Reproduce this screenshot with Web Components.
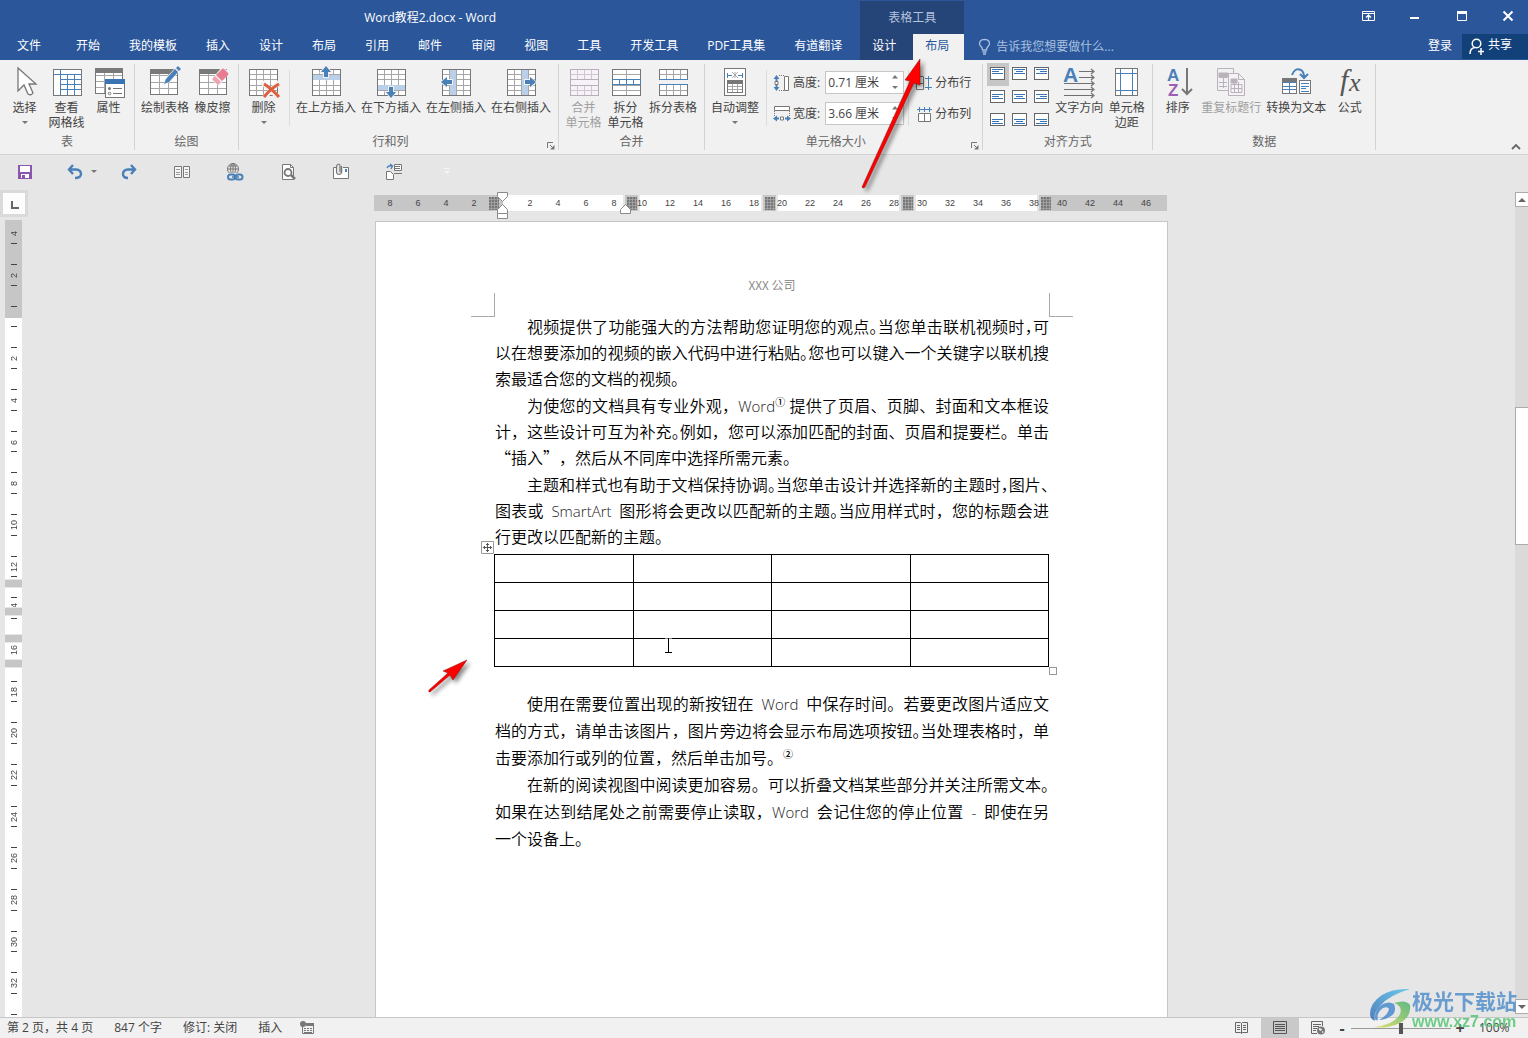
<!DOCTYPE html>
<html lang="zh-CN">
<head>
<meta charset="utf-8">
<title>Word教程2.docx - Word</title>
<style>
html,body{height:100%;margin:0}
body{font:12px/16px "Open Sans","Noto Sans CJK SC",sans-serif;color:#444;background:#e6e6e6;overflow:hidden}
</style>
</head>
<body>
<word-app></word-app>
<script>
const grid=(x,y,w,h,c,r,line='#a6a6a6',edge='#777',fill='#fff')=>{
  let d='';
  for(let i=1;i<c;i++)d+=`M${x+Math.round(w*i/c)+.5} ${y+1}v${h-1}`;
  for(let i=1;i<r;i++)d+=`M${x+1} ${y+Math.round(h*i/r)+.5}h${w-1}`;
  return `<rect x="${x+.5}" y="${y+.5}" width="${w}" height="${h}" fill="${fill}" stroke="${edge}"/><path d="${d}" stroke="${line}"/>`;
};
const page=lines=>`<rect x=".5" y=".5" width="14" height="12" fill="#fff" stroke="#666"/><path d="${lines}" stroke="#3b74b5"/>`;
const al=(v,h)=>{const y=v==0?2.5:v==1?4.5:6.5;let d='';
  [11,7,11].forEach((w,i)=>{const x=h==0?2:h==1?Math.floor((15-w)/2):13-w;d+=`M${x} ${y+i*2}h${w}`});return page(d)};
const B='#4a80b8';
const ICONS={
 select:[32,32,`<path d="M9 2v23l6-6 4 9q3 2 5-1l-4-9h7z" fill="#fff" stroke="#777" stroke-width="1.3"/>`],
 viewgrid:[32,32,`<g shape-rendering="crispEdges">${grid(2,3,28,26,1,1)}<path d="M9.5 4v25M3 8.5h27" stroke="${B}"/><path d="M16.5 8v21M23.5 8v21M9 13.5h21M9 18.5h21M9 23.5h21" stroke="${B}"/></g>`],
 props:[32,32,`<g shape-rendering="crispEdges">${grid(2,3,27,24,3,4)}<path d="M2 2h28v5H2z" fill="#7a7a7a"/><rect x="12.5" y="13.5" width="19" height="18" fill="#fff" stroke="#777"/><path d="M12 13h20v5H12z" fill="#3b74b5"/><path d="M20 22.5h9M20 27.5h9" stroke="#777"/></g><circle cx="16.5" cy="22.5" r="1.5" fill="#777"/><circle cx="16.5" cy="27.5" r="1.3" fill="#fff" stroke="#777"/>`],
 draw:[32,32,`<g shape-rendering="crispEdges">${grid(1,3,27,25,3,4)}<path d="M1 3h28v5H1z" fill="#7a7a7a"/></g><path d="M14 19l3-7L28 0l4 3-11 13z" fill="#f1f1f1"/><path d="M15 18l2-5 9-10 3 3-9 10zM27 2l2-2 3 3-2 2z" fill="${B}"/>`],
 erase:[32,32,`<g shape-rendering="crispEdges">${grid(2,3,27,25,3,4)}<path d="M2 3h28v5H2z" fill="#7a7a7a"/></g><path d="M14 14L25 1l8 5-11 14z" fill="#f1f1f1"/><path d="M19 9l6-6q1-1 2 0l4 4q1 1 0 2l-6 6z" fill="#e87d92"/><path d="M18 10l6 6-2 2q-1 1-2 0l-4-4q-1-1 0-2z" fill="#f0a1b0"/>`],
 del:[32,32,`<g shape-rendering="crispEdges">${grid(1,3,28,26,4,5)}</g><path d="M14 16l18 17M31 16L15 33" stroke="#f1f1f1" stroke-width="5"/><path d="M16 18q7 4 15 13M31 18Q22 23 16 31" stroke="#dd5f3b" stroke-width="3"/>`],
 up:[32,32,`<g shape-rendering="crispEdges">${grid(2,3,28,26,4,5)}<path d="M3 9h27v5H3z" fill="#bad0e8"/></g><path d="M16-1l7 8h-4v5h-6V7H9z" fill="#f1f1f1"/><path d="M16 0l5 6h-3v5h-4V6h-3z" fill="${B}"/>`],
 down:[32,32,`<g shape-rendering="crispEdges">${grid(2,3,28,26,4,5)}<path d="M3 19h27v5H3z" fill="#bad0e8"/></g><path d="M16 33l7-8h-4v-5h-6v5H9z" fill="#f1f1f1"/><path d="M16 32l5-6h-3v-5h-4v5h-3z" fill="${B}"/>`],
 left:[32,32,`<g shape-rendering="crispEdges">${grid(2,3,28,26,4,5)}<path d="M10 4h6v25h-6z" fill="#bad0e8"/></g><path d="M0 16l7-6v3h6v6H7v4z" fill="#f1f1f1"/><path d="M1 16l6-5v3h5v4H7v3z" fill="${B}"/>`],
 right:[32,32,`<g shape-rendering="crispEdges">${grid(2,3,28,26,4,5)}<path d="M17 4h6v25h-6z" fill="#bad0e8"/></g><path d="M32 16l-7-6v3h-6v6h6v4z" fill="#f1f1f1"/><path d="M31 16l-6-5v3h-5v4h5v3z" fill="${B}"/>`],
 merge:[32,32,`<g shape-rendering="crispEdges">${grid(2,3,28,26,4,5,'#d0c5d2','#b9adbb','#f7f1f8')}<path d="M3 14h27v5H3z" fill="#f7f1f8"/><path d="M2 13.5h28M2 19.5h28" stroke="#b9adbb"/></g>`],
 split:[32,32,`<g shape-rendering="crispEdges">${grid(2,3,28,26,2,5)}<path d="M2.5 13.5h28v5h-28zM9.5 14v5M16.5 14v5M23.5 14v5" stroke="${B}" fill="#fff"/></g>`],
 splittable:[32,32,`<g shape-rendering="crispEdges">${grid(2,3,28,10,4,2)}${grid(2,18,28,11,4,2)}<path d="M2 13.5h29M2 18.5h29" stroke="${B}"/></g>`],
 autofit:[32,32,`<g shape-rendering="crispEdges"><rect x="5.5" y="2.5" width="21" height="27" fill="#fff" stroke="#777"/>${grid(8,14,15,12,3,4)}<path d="M8 14h16v4H8z" fill="#777"/><path d="M8.5 7v5M23.5 7v5M9 9.5h4M19 9.5h4" stroke="${B}"/></g><path d="M13 6l6 6M19 6l-6 6M16 6v6" stroke="#999" stroke-width=".8"/>`],
 textdir:[32,32,`<text x="0" y="16" font-family="Liberation Sans" font-size="21" font-weight="700" fill="${B}">A</text><path d="M16 5.5h14M16 11.5h14M1 17.5h29M1 23.5h29M1 29.5h29M28 3l3 2.5-3 2.5M28 9l3 2.5-3 2.5M28 15l3 2.5-3 2.5M28 21l3 2.5-3 2.5M28 27l3 2.5-3 2.5" stroke="#707070" stroke-width="1.2"/>`],
 margins:[32,32,`<g shape-rendering="crispEdges"><rect x="4.5" y="2.5" width="22" height="27" fill="#fff" stroke="#777"/><path d="M9.5 3v26M21.5 3v26M5 7.5h21M5 24.5h21" stroke="${B}"/></g>`],
 sort:[32,32,`<text x="5" y="15" font-family="Liberation Sans" font-size="17" font-weight="700" fill="${B}">A</text><text x="6" y="30" font-family="Liberation Sans" font-size="17" font-weight="700" fill="#9b5fb8">Z</text><path d="M25 2v25M20 23l5 5 5-5" stroke="#777" stroke-width="2"/>`],
 repeat:[32,32,`<g stroke="#b9b1bb"><path d="M2.5 2.5h16v22h-16z" fill="#f1f1f1"/><path d="M4 11.5h8M4 16.5h8M4 20.5h8M8.5 7v15"/><path d="M4 7h9v4H4z" fill="#b9b1bb"/><path d="M13.5 7.5h10l6 6v16h-16z" fill="#f5f2f6"/><path d="M23.5 7.5v6h6M16 18.5h11v8H16zM16 22.5h11M19.5 14v12M23.5 16v10"/><path d="M16 13h6v4h-6z" fill="#b9b1bb"/></g>`],
 convert:[32,32,`<g shape-rendering="crispEdges">${grid(2,12,14,15,2,4,B)}<path d="M2 12h15v4H2z" fill="#777"/><rect x="19.5" y="14.5" width="11" height="13" fill="#fff" stroke="#777"/><path d="M21 17.5h8M21 20.5h8M21 22.5h5M21 25.5h8" stroke="${B}"/></g><path d="M12 9Q15 1 21 4q3 2 3 7M20 8l4 4 4-4" stroke="${B}" stroke-width="2"/>`],
 fx:[32,32,`<text x="6" y="24" font-family="Liberation Serif" font-style="italic" font-size="30" fill="#555">f</text><text x="15" y="25" font-family="Liberation Serif" font-style="italic" font-size="26" fill="#555">x</text>`],
 rowh:[18,18,`<path d="M11.5 2.5h4v14h-4z" fill="#fff" stroke="#777"/><path d="M6 1.5h5M6 16.5h5" stroke="#777" stroke-dasharray="1 1"/><path d="M3.5 1l3 4h-6zM3.5 17l3-4h-6z" fill="${B}"/><path d="M3.5 4v3M3.5 11v3" stroke="${B}" stroke-width="2"/><path d="M2 7.5h3v3H2z" fill="#fff" stroke="#777"/>`],
 colw:[18,18,`<path d="M1.5 1.5h15v4h-15z" fill="#fff" stroke="#777"/><path d="M1.5 6v5M16.5 6v5" stroke="#777" stroke-dasharray="1 1"/><path d="M0 13.5l4-3v6zM18 13.5l-4-3v6z" fill="${B}"/><path d="M3 13.5h3M12 13.5h3" stroke="${B}" stroke-width="2"/><path d="M7.5 12h3v3h-3z" fill="#fff" stroke="#777"/>`],
 disrow:[18,18,`<path d="M1.5 2.5h7v13h-7zM1 9.5h8" stroke="#777" fill="#fff"/><path d="M10 4.5h7M10 13.5h7M13.5 2v14" stroke="${B}"/>`],
 discol:[18,18,`<path d="M3.5 8.5h12v8h-12zM9.5 8v9" stroke="#777" fill="#fff"/><path d="M2 4.5h15M4.5 2v5M9.5 2v5M14.5 2v5" stroke="${B}"/>`],
 launch:[8,8,`<path d="M.5 6V.5H6" stroke="#777"/><path d="M3 3l3 3" stroke="#777"/><path d="M7.5 3v4.5H3z" fill="#777"/>`],
 chevron:[10,10,`<path d="M1 7l4-4 4 4" stroke="#666" stroke-width="1.8"/>`],
 save:[16,16,`<path d="M1 1h14v14H1z" fill="#8b57ae"/><path d="M3 2h10v6H3zM4 10h8v4H4z" fill="#fff"/><path d="M5 11h3v3H5z" fill="#8b57ae"/>`],
 undo:[16,16,`<path d="M6 1L2 5.5 6 10M2 5.5h7q5 .5 5 4.5t-6 4" stroke="#4a7fb9" stroke-width="2.4"/>`],
 redo:[16,16,`<path d="M10 1l4 4.5-4 4.5M14 5.5H7q-5 .5-5 4.5t5 4" stroke="#4a7fb9" stroke-width="2.4"/>`],
 cols:[18,16,`<path d="M1.5 2.5h7v11h-7zM10.5 2.5h6v11h-6z" fill="#f5f5f5" stroke="#777"/><path d="M3 5.5h4M3 8.5h4M3 10.5h4M12 5.5h3M12 8.5h3M12 10.5h3" stroke="#999"/>`],
 weblink:[18,18,`<circle cx="7" cy="6" r="5.5" stroke="#777"/><path d="M1.5 6h11M7 .5v11M3 3h8" stroke="#777"/><ellipse cx="7" cy="6" rx="2.5" ry="5.5" stroke="#777"/><path d="M1 10h17v8H1z" fill="#e6e6e6"/><rect x="2" y="11.5" width="7" height="5" rx="2.5" stroke="${B}" stroke-width="2"/><rect x="9.5" y="11.5" width="7" height="5" rx="2.5" stroke="${B}" stroke-width="2"/><path d="M6 14h7" stroke="${B}" stroke-width="1.5"/>`],
 preview:[18,18,`<path d="M3.5 1.5h8l3 3v12h-11z" fill="#fff" stroke="#777"/><path d="M11.5 1.5v3h3" stroke="#777"/><circle cx="9" cy="9.5" r="3.5" fill="#fff" stroke="#777" stroke-width="1.8"/><path d="M12 12l4 4" stroke="#777" stroke-width="2.5"/>`],
 attach:[18,18,`<path d="M1.5 4.5h15v11h-15z" fill="#fff" stroke="#777"/><path d="M13 6h2v3h-2z" fill="${B}"/><path d="M4 0h7v11H4z" fill="#e6e6e6"/><path d="M9.5 3v6q-.5 2.5-2.5 2.5T4.5 9V3.5Q5 1 6.5 1T8 3v6" stroke="#777" stroke-width="1.2"/>`],
 linkdoc:[18,18,`<path d="M9.5 1.5h7v6h-7z" fill="#fff" stroke="#777"/><path d="M10 3.5h5M10 5.5h5M9 10.5h8" stroke="#777"/><path d="M1.5 8.5h4l3 3v5h-7z" fill="#fff" stroke="#777"/><path d="M2 5q1-3 5-2M5 1l2.5 2L6 6" stroke="${B}" stroke-width="1.3"/>`],
 caret:[8,8,`<path d="M1 2h6L4 5z" fill="#777"/>`],
 caretup:[8,8,`<path d="M1 5.5h6L4 2z" fill="#777"/>`],
 up2:[8,8,`<path d="M0 6h8L4 2z" fill="#666"/>`],
 down2:[8,8,`<path d="M0 2h8L4 6z" fill="#666"/>`],
 ghost:[8,8,`<path d="M1 .5h6" stroke="#f5f5f5"/><path d="M1 3h6L4 6z" fill="#f5f5f5"/>`],
 bulb:[14,18,`<path d="M4.5 12Q4.5 10 3 8.5 1.5 7 1.5 5.5q.5-4 5-4.2 4.8.2 5 4.2 0 1.5-1.5 3T8.5 12zM4.5 14h4M5 16h3" stroke="#a9c0e0" stroke-width="1.3"/>`],
 disp:[16,12,`<path d="M1.5 1.5h12v9h-12zM1 3.5h13" stroke="#fff"/><path d="M7.5 10V5M5 7.5L7.5 5 10 7.5" stroke="#fff" stroke-width="1.3"/>`],
 min:[12,12,`<path d="M1 7h9v2H1z" fill="#fff"/>`],
 max:[12,12,`<path d="M1.5 1.5h9v9h-9z" stroke="#fff"/><path d="M1 1h10v3H1z" fill="#fff"/>`],
 close:[12,12,`<path d="M1.5 1.5l9 9M10.5 1.5l-9 9" stroke="#fff" stroke-width="2"/>`],
 person:[18,18,`<circle cx="8.5" cy="5.5" r="4.3" stroke="#fff" stroke-width="1.5"/><path d="M2 16q0-6 5-6.5M10 13.5h6M13 10v7" stroke="#fff" stroke-width="1.5"/>`],
 macro:[16,16,`<path d="M3.5 4.5h11v9h-11z" fill="#f1f1f1" stroke="#777"/><path d="M7 3h8v3H7z" fill="#777"/><path d="M5 8.5h2M8 8.5h2M11 8.5h2M5 10.5h2M8 10.5h2M11 10.5h2M5 12.5h8" stroke="#777"/><circle cx="4" cy="4" r="3" fill="#777"/>`],
 read:[16,16,`<path d="M1.5 2.5h5l1 1 1-1h5v10h-5l-1 1-1-1h-5zM7.5 3v11" stroke="#666"/><path d="M3 5.5h3M3 7.5h3M3 9.5h3M9 5.5h3M9 7.5h3M9 9.5h3" stroke="#666"/>`],
 print:[16,16,`<path d="M1.5 1.5h13v12h-13z" stroke="#555"/><path d="M3 4.5h10M3 6.5h10M3 8.5h10M3 10.5h10" stroke="#555"/>`],
 web:[16,16,`<path d="M12.5 6V1.5h-11v12H7" stroke="#666"/><path d="M3 4.5h8M3 6.5h6M3 8.5h4M3 10.5h3" stroke="#666"/><circle cx="11" cy="10.5" r="4" fill="#777"/><path d="M9 8l3 1-1 2-2-1zM12 11l2 1-2 1z" fill="#f1f1f1"/>`],
 move:[13,13,`<path d="M.5.5h12v12H.5z" fill="#fff" stroke="#999"/><path d="M6.5 2v9M2 6.5h9M5 3.5h3M5 9.5h3M3.5 5v3M9.5 5v3" stroke="#555"/>`],
 ibeam:[9,18,`<path d="M1 .5h7" stroke="#fff" stroke-width="2"/><path d="M4.5 1v14M1 15.5h7" stroke="#000"/>`],
 block:[10,13,`<path d="M0 0h10v13H0z" fill="#777"/><path d="M2.5 0v13M5.5 0v13M8.5 0v13M0 2.5h10M0 5.5h10M0 8.5h10M0 11.5h10" stroke="#aaa" stroke-width=".7"/>`],
 indent:[12,28,`<path d="M.5.5h10v4l-5 5-5-5z" fill="#fff" stroke="#8a8a8a"/><path d="M5.5 12.5l5 5v4H.5v-4zM.5 21.5h10v5H.5z" fill="#fff" stroke="#8a8a8a"/>`],
 indentr:[12,10,`<path d="M5.5 .5l5 5v4H.5v-4z" fill="#fff" stroke="#8a8a8a"/>`]
};
['top','mid','bot'].forEach((v,i)=>['l','c','r'].forEach((h,j)=>ICONS['al-'+v+h]=[15,13,al(i,j)]));

const define=(name,css,html)=>customElements.define(name,class extends HTMLElement{
  connectedCallback(){
    if(this.shadowRoot)return;
    const r=this.attachShadow({mode:'open'});
    const t=document.createElement('template');
    t.innerHTML='<style>*{box-sizing:border-box}button{font:inherit;color:inherit;border:0;padding:0;background:none}'+css+'</style>'+(typeof html==='function'?html(this):html);
    r.append(t.content.cloneNode(true));
  }
});

define('word-icon',':host{display:inline-flex;flex:none}svg{display:block;overflow:visible}',el=>{
  const [w,h,s]=ICONS[el.getAttribute('name')];
  return `<svg width="${w}" height="${h}" viewBox="0 0 ${w} ${h}" fill="none" aria-hidden="true">${s}</svg>`;
});

define('ribbon-button',`:host{display:flex}
button{display:flex;flex-direction:column;align-items:center;min-width:42px;padding:0 3px 0 2px;line-height:15px;white-space:nowrap;color:#444}
:host([off]) button{color:#a0a0a0}
.t{margin-top:2px;text-align:center}
.c{height:15px;display:flex;align-items:center}`,
el=>`<button type="button"${el.hasAttribute('off')?' disabled':''}><word-icon name="${el.getAttribute('icon')}"></word-icon><span class="t"><slot></slot></span>${el.hasAttribute('menu')?'<span class="c"><word-icon name="caret"></word-icon></span>':''}</button>`);

define('ribbon-group',`:host{display:flex;flex-direction:column;position:relative;padding:2px 4px 0;margin:4px 0;border-right:1px solid #d2d2d2}
.b{display:flex;height:70px}.l{text-align:center;color:#666;line-height:16px}
:host([launcher]) .l{padding-right:16px}
.k{position:absolute;right:3px;bottom:0;display:flex}`,
el=>`<div class="b"><slot></slot></div><div class="l">${el.getAttribute('label')}</div>${el.hasAttribute('launcher')?'<button class="k" aria-label="更多选项"><word-icon name="launch"></word-icon></button>':''}`);

define('ribbon-divider',':host{display:block;width:1px;height:56px;background:#dcdcdc;margin:4px 4px 0}','');

define('size-field',`:host{display:flex;align-items:center}
label{margin:0 5px 0 2px}
.f{display:flex;width:79px;height:23px;background:#fff;border:1px solid #c6c6c6}
input{flex:1;min-width:0;border:0;padding:0 0 0 2px;font:inherit;color:#444;background:none;outline:0}
.s{display:flex;flex-direction:column;justify-content:space-around;width:16px}.s button{display:flex;justify-content:center}`,
el=>`<word-icon name="${el.getAttribute('icon')}"></word-icon><label for="f">${el.getAttribute('label')}</label><div class="f"><input id="f" value="${el.getAttribute('value')}"><div class="s"><button aria-label="增加"><word-icon name="caretup"></word-icon></button><button aria-label="减少"><word-icon name="caret"></word-icon></button></div></div>`);

define('small-button',':host{display:flex}button{display:flex;align-items:center;gap:2px;height:23px;white-space:nowrap}',
el=>`<button type="button"><word-icon name="${el.getAttribute('icon')}"></word-icon><slot></slot></button>`);

define('align-grid',`:host{display:grid;grid-template-columns:repeat(3,22px);grid-auto-rows:23px;margin-top:-3px}
button{display:flex;justify-content:center;padding:4px 1px 0 0}button:first-of-type{background:#c6c6c6}`,
()=>['top','mid','bot'].map(v=>['l','c','r'].map(h=>`<button aria-label="对齐 ${v} ${h}"><word-icon name="al-${v}${h}"></word-icon></button>`).join('')).join(''));

define('title-bar',`:host{display:flex;background:#2b579a;color:#fff;height:60px}
.main,.ctx,.end{display:flex;flex-direction:column}
.title{height:34px;line-height:36px;text-align:center}
.tabs{display:flex;gap:29px;height:26px;padding:0 18px 0 17px;white-space:nowrap}
.tabs button:first-child{margin-right:6px}
.ctx{background:#254478;margin-top:1px}.ctx .title{color:#b4c3dc;height:33px;line-height:34px}
.sub{display:flex;height:26px}.sub button{padding:0 13px 3px 12px}.tabs button{padding-bottom:3px}
.sub .on{background:#f1f1f1;color:#2b579a;margin-left:4px;padding-right:15px}
.end{flex:1}
.win{display:flex;height:34px;align-items:center;justify-content:flex-end}
.win button{display:flex;justify-content:center;width:46px;padding-bottom:2px}
.win button:last-child{width:40px}.win button:nth-last-child(2){width:52px}.win button:nth-last-child(3){width:42px}.win button:first-child{width:50px}
.row{display:flex;height:26px;align-items:center}
.tell{display:flex;flex:1;align-items:center;gap:4px;padding-left:14px}
input{flex:1;border:0;background:none;outline:0;font:inherit;color:#fff;padding:0}
input::placeholder{color:#a9c0e0;opacity:1}
.in{padding:0 10px 2px}
.share{display:flex;align-items:center;gap:2px;align-self:stretch;margin-bottom:1px;padding:0 16px 3px 6px;background:#124078}
.share word-icon{margin-top:3px}`,
`<div class="main"><div class="title">Word教程2.docx - Word</div><nav class="tabs">${['文件','开始','我的模板','插入','设计','布局','引用','邮件','审阅','视图','工具','开发工具','PDF工具集','有道翻译'].map(t=>`<button>${t}</button>`).join('')}</nav></div>
<div class="ctx"><div class="title">表格工具</div><nav class="sub"><button>设计</button><button class="on">布局</button></nav></div>
<div class="end"><div class="win"><button aria-label="功能区显示选项"><word-icon name="disp"></word-icon></button><button aria-label="最小化"><word-icon name="min"></word-icon></button><button aria-label="最大化"><word-icon name="max"></word-icon></button><button aria-label="关闭"><word-icon name="close"></word-icon></button></div>
<div class="row"><label class="tell"><word-icon name="bulb"></word-icon><input aria-label="告诉我您想要做什么" placeholder="告诉我您想要做什么..."></label><button class="in">登录</button><button class="share"><word-icon name="person"></word-icon>共享</button></div></div>`);

define('word-ribbon',`:host{display:flex;position:relative;height:95px;background:#f1f1f1;border-bottom:1px solid #d2d2d2}
.st{display:flex;flex-direction:column;gap:8px;padding:5px 0 0 2px}
.st.r{padding:5px 7px 0 2px}
.col{position:absolute;right:7px;bottom:2px;display:flex}`,
`<ribbon-group label="表"><ribbon-button icon="select" menu>选择</ribbon-button><ribbon-button icon="viewgrid">查看<br>网格线</ribbon-button><ribbon-button icon="props">属性</ribbon-button></ribbon-group>
<ribbon-group label="绘图"><ribbon-button icon="draw">绘制表格</ribbon-button><ribbon-button icon="erase">橡皮擦</ribbon-button></ribbon-group>
<ribbon-group label="行和列" launcher><ribbon-button icon="del" menu>删除</ribbon-button><ribbon-divider></ribbon-divider><ribbon-button icon="up">在上方插入</ribbon-button><ribbon-button icon="down">在下方插入</ribbon-button><ribbon-button icon="left">在左侧插入</ribbon-button><ribbon-button icon="right">在右侧插入</ribbon-button></ribbon-group>
<ribbon-group label="合并"><ribbon-button icon="merge" off>合并<br>单元格</ribbon-button><ribbon-button icon="split">拆分<br>单元格</ribbon-button><ribbon-button icon="splittable">拆分表格</ribbon-button></ribbon-group>
<ribbon-group label="单元格大小" launcher><ribbon-button icon="autofit" menu>自动调整</ribbon-button><ribbon-divider></ribbon-divider><div class="st"><size-field icon="rowh" label="高度:" value="0.71 厘米"></size-field><size-field icon="colw" label="宽度:" value="3.66 厘米"></size-field></div><ribbon-divider></ribbon-divider><div class="st r"><small-button icon="disrow">分布行</small-button><small-button icon="discol">分布列</small-button></div></ribbon-group>
<ribbon-group label="对齐方式"><align-grid></align-grid><ribbon-button icon="textdir">文字方向</ribbon-button><ribbon-button icon="margins">单元格<br>边距</ribbon-button></ribbon-group>
<ribbon-group label="数据"><ribbon-button icon="sort">排序</ribbon-button><ribbon-button icon="repeat" off>重复标题行</ribbon-button><ribbon-button icon="convert">转换为文本</ribbon-button><ribbon-button icon="fx">公式</ribbon-button></ribbon-group>
<button class="col" aria-label="折叠功能区"><word-icon name="chevron"></word-icon></button>`);

define('quick-bar',`:host{display:flex;align-items:center;gap:25px;height:35px;padding:0 11px 2px}
button{display:flex;justify-content:center;align-items:center;width:28px;height:24px}
.u{display:flex;margin:0 -9px 0 -3px}.u button+button{width:10px}`,
`<button aria-label="保存"><word-icon name="save"></word-icon></button><div class="u"><button aria-label="撤消"><word-icon name="undo"></word-icon></button><button aria-label="撤消列表"><word-icon name="caret"></word-icon></button></div>${[['redo','重做'],['cols','多页'],['weblink','超链接'],['preview','打印预览'],['attach','邮件附件'],['linkdoc','切换'],['ghost','自定义']].map(a=>`<button aria-label="${a[1]}"><word-icon name="${a[0]}"></word-icon></button>`).join('')}`);

define('h-ruler',`:host{display:flex;position:relative;height:16px;width:793px;margin:5px 2px 10px 0;padding-left:2px;font:9px/17px "Liberation Sans",sans-serif;
background:linear-gradient(90deg,#c6c6c6 129px,#fff 129px 249px,#e6e6e6 249px 251px,#c6c6c6 251px 264px,#e6e6e6 264px 266px,#fff 266px 387px,#e6e6e6 387px 389px,#c6c6c6 389px 402px,#e6e6e6 402px 404px,#fff 404px 525px,#e6e6e6 525px 527px,#c6c6c6 527px 540px,#e6e6e6 540px 542px,#fff 542px 663px,#e6e6e6 663px 665px,#c6c6c6 665px)}
span{width:28px;text-align:center;position:relative;z-index:1}
.m{position:absolute;z-index:2}`,
()=>{let s='';for(let n=-8;n<=46;n+=2)s+=`<span>${n?Math.abs(n):''}</span>`;
return s+[115,253,391,529,667].map(x=>`<word-icon class="m" name="block" style="left:${x}px;top:2px"></word-icon>`).join('')+'<word-icon class="m" name="indent" style="left:123px;top:-3px"></word-icon><word-icon class="m" name="indentr" style="left:246px;top:9px"></word-icon>'});

define('v-ruler',`:host{display:flex;flex-direction:column;width:28px;font:9px/9px "Liberation Sans",sans-serif}
.tab{height:27px;border:3px solid #dadada;background:#fdfdfd;width:28px;display:flex;align-items:center;justify-content:center;padding:3px 0 0 1px}
.tab i{width:8px;height:8px;border:solid #666;border-width:0 0 2px 2px}
.bar{position:relative;flex:1;min-height:0;overflow:hidden;margin:3px 6px 0 5px;background:linear-gradient(#c6c6c6 98px,#fff 98px)}
.c{display:flex;flex-direction:column;align-items:center;justify-content:space-between;height:42px;padding:10px 0}
.c:nth-child(3n){height:41px}.c:first-child{margin-top:-8px}
.c:before,.c:after{content:"";width:6px;height:1px;background:#444;margin-left:1px}
.c:first-child:before{visibility:hidden}
.c span{writing-mode:vertical-rl;transform:rotate(180deg);height:12px;text-align:center;margin-left:1px}
.g{position:absolute;left:0;right:0;height:7px;background:#c6c6c6;outline:1px solid #e6e6e6}`,
()=>{let s='';for(let n=-4;n<=34;n+=2)s+=`<div class="c"><span>${n&&n<34?Math.abs(n):''}</span></div>`;
return '<div class="tab"><i></i></div><div class="bar">'+s+[360,388,415,440].map(y=>`<div class="g" style="top:${y}px"></div>`).join('')+'</div>'});

define('doc-page',`:host{display:block;flex:none;width:793px;height:1122px;padding:55px 118px 0 119px;background:#fff;border:1px solid #c6c6c6;color:#000;font:350 16px/26px "Noto Sans CJK SC",sans-serif;text-spacing-trim:space-all}
header{font-size:12px;line-height:16px;color:#808080;text-align:center}
.mk{display:flex;justify-content:space-between;margin:0 -24px -4px}
.mk i{width:24px;height:24px;border:solid #aaa;border-width:0 1px 1px 0}.mk i+i{border-width:0 0 1px 1px}
p{margin:0 0 1px;text-indent:32px;text-align:justify}
.b p{line-height:27px;margin:0}
.e{font:350 15px/20px "Open Sans",sans-serif;color:#222;margin:0 4px}
.n{margin-left:0}.z{margin:0}
b{font-weight:inherit;font-feature-settings:"halt"}
sup{font-size:10px;font-weight:500;line-height:10px}
.t{position:relative;margin:5px 0 23px -1px}
table{border-collapse:collapse;width:100%;table-layout:fixed}
td{border:1px solid #000;height:28px;padding:0}
.h{position:absolute;left:-13px;top:-13px}.q{position:absolute;right:-8px;bottom:-8px;width:8px;height:8px;border:1px solid #999;background:#fff}
.i{position:absolute;left:170px;top:83px}`,
`<header>XXX 公司</header><div class="mk"><i></i><i></i></div>
<p>视频提供了功能强大的方法帮助您证明您的观点<b>。</b>当您单击联机视频时<b>，</b>可以在想要添加的视频的嵌入代码中进行粘贴<b>。</b>您也可以键入一个关键字以联机搜索最适合您的文档的视频。</p>
<p>为使您的文档具有专业外观，<span class="e z">Word</span><sup>①</sup> 提供了页眉、页脚、封面和文本框设计，这些设计可互为补充<b>。</b>例如，您可以添加匹配的封面、页眉和提要栏。单击“插入”，然后从不同库中选择所需元素。</p>
<p>主题和样式也有助于文档保持协调<b>。</b>当您单击设计并选择新的主题时<b>，</b>图片<b>、</b>图表或 <span class="e">SmartArt</span> 图形将会更改以匹配新的主题<b>。</b>当应用样式时，您的标题会进行更改以匹配新的主题。</p>
<div class="t"><table><tbody>${'<tr><td></td><td></td><td></td><td></td></tr>'.repeat(4)}</tbody></table><word-icon class="h" name="move"></word-icon><div class="q"></div><word-icon class="i" name="ibeam"></word-icon></div>
<div class="b"><p>使用在需要位置出现的新按钮在 <span class="e">Word</span> 中保存时间。若要更改图片适应文档的方式，请单击该图片，图片旁边将会显示布局选项按钮<b>。</b>当处理表格时，单击要添加行或列的位置，然后单击加号。<sup>②</sup></p>
<p>在新的阅读视图中阅读更加容易。可以折叠文档某些部分并关注所需文本<b>。</b>如果在达到结尾处之前需要停止读取，<span class="e n">Word</span> 会记住您的停止位置 <span class="e">-</span> 即使在另一个设备上。</p></div>`);

define('scroll-bar',`:host{display:flex;flex-direction:column;width:13px;margin:2px 0 3px;background:#dadada}
button{height:15px;background:#fff;border:1px solid #ababab;border-right:0;display:flex;align-items:center;justify-content:center}
.th{height:138px;margin:200px 0 auto;background:#fff;border:1px solid #ababab;border-right:0}`,
`<button aria-label="向上滚动"><word-icon name="up2"></word-icon></button><div class="th"></div><button aria-label="向下滚动"><word-icon name="down2"></word-icon></button>`);

define('status-bar',`:host{display:flex;align-items:center;height:21px;padding:0 17px 0 7px;background:#f1f1f1;border-top:1px solid #c6c6c6;white-space:nowrap}
.l{display:flex;gap:21px;flex:1;align-items:center}
.l button{display:flex;margin-left:-4px}
.v{display:flex;align-self:stretch}.v button{display:flex;align-items:center;justify-content:center;width:38px}.v .on{background:#c9c9c9}
.z{display:flex;align-items:center}
.z button{width:10px;font-size:16px;font-weight:700;line-height:16px}
input{appearance:none;width:100px;height:12px;margin:0 4px;background:linear-gradient(#999,#999) center/100% 1px no-repeat}
input::-webkit-slider-thumb{appearance:none;width:4px;height:11px;background:#555}
.p{margin-left:14px;width:32px}`,
`<div class="l"><span>第 2 页，共 4 页</span><span>847 个字</span><span>修订: 关闭</span><span>插入</span><button aria-label="录制宏"><word-icon name="macro"></word-icon></button></div>
<div class="v"><button aria-label="阅读视图"><word-icon name="read"></word-icon></button><button class="on" aria-label="页面视图"><word-icon name="print"></word-icon></button><button aria-label="Web 版式视图"><word-icon name="web"></word-icon></button></div>
<div class="z"><button aria-label="缩小">-</button><input type="range" aria-label="缩放" value="50"><button aria-label="放大">+</button><span class="p">100%</span></div>`);

define('water-mark',`:host{position:absolute;right:11px;bottom:7px;display:flex;pointer-events:none;opacity:.8}
div{display:flex;flex-direction:column;font:700 21px/26px "Noto Sans CJK SC",sans-serif;color:#4a8bca}
span{font:700 16px/18px "Liberation Sans",sans-serif;color:#4fc46f}`,
`<svg width="44" height="44" viewBox="0 0 44 44"><defs><linearGradient id="a" x1="1" y1="0" x2="0" y2="1"><stop stop-color="#4cc3ea"/><stop offset="1" stop-color="#2b66b4"/></linearGradient><linearGradient id="b" x1="1" y1="0" x2="0" y2="1"><stop stop-color="#3fae6e"/><stop offset="1" stop-color="#d9dc4c"/></linearGradient></defs><path d="M42 2Q25 1 14 8 2 16 2 27q0 5 5 7-2-8 5-15Q21 8 42 2z" fill="url(#a)"/><path d="M7 32Q6 22 15 17q6-3 11 0 3 8-3 12-6 4-12 4 9-5 10-11-1-3-6-1-7 5-5 12-2 1-3-1z" fill="#3f86cc"/><path d="M26 16q12-4 16 2 2 17-22 22-8 1-14 0 20-2 26-13 3-8-6-11z" fill="url(#b)"/></svg><div>极光下载站<span>www.xz7.com</span></div>`);

define('red-arrow',':host{position:absolute;pointer-events:none}svg{display:block;overflow:visible;filter:drop-shadow(3px 3px 2px #0007)}',
el=>el.hasAttribute('long')?'<svg width="60" height="132" viewBox="0 0 60 132"><path d="M58 0v26l-6-2L3 128q-2 2-3 0L48 22l-5-1z" fill="#f00" stroke="#8a1010" stroke-width=".5"/></svg>'
:'<svg width="40" height="34" viewBox="0 0 40 34"><path d="M39 0L25 20l-3-5L2 32q-2 0-1-2L20 13l-5-2z" fill="#f00" stroke="#8a1010" stroke-width=".5"/></svg>');

define('word-app',`:host{display:flex;flex-direction:column;height:100vh;position:relative;overflow:hidden}
.w{display:flex;flex:1;min-height:0}
.d{display:flex;flex:1;min-width:0;flex-direction:column;align-items:center;overflow:hidden}
.a1{left:862px;top:59px}.a2{left:428px;top:660px}`,
`<title-bar></title-bar><word-ribbon></word-ribbon><quick-bar></quick-bar>
<div class="w"><v-ruler></v-ruler><main class="d"><h-ruler></h-ruler><doc-page></doc-page></main><scroll-bar></scroll-bar></div>
<status-bar></status-bar><red-arrow class="a1" long></red-arrow><red-arrow class="a2"></red-arrow><water-mark></water-mark>`);
</script>
</body>
</html>
